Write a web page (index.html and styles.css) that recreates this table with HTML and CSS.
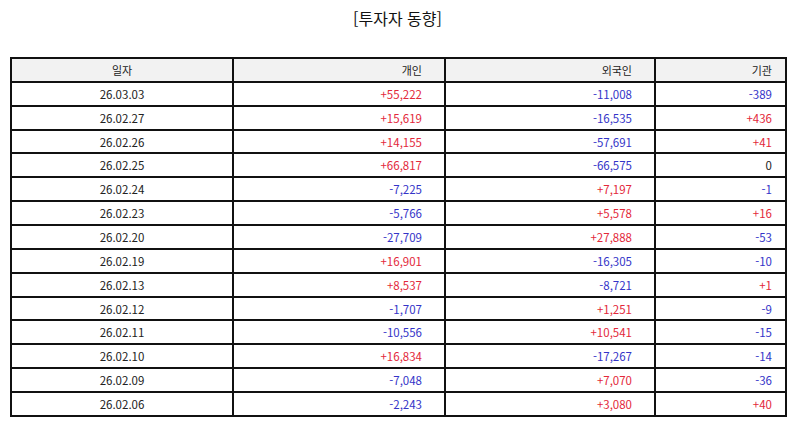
FILE: index.html
```html
<!DOCTYPE html>
<html lang="ko">
<head>
<meta charset="utf-8">
<title>투자자 동향</title>
<link rel="stylesheet" href="styles.css">
</head>
<body>
<div class="page">
  <h1 class="title">[투자자 동향]</h1>
  <table class="grid">
    <colgroup>
      <col class="c-date">
      <col class="c-ind">
      <col class="c-for">
      <col class="c-ins">
    </colgroup>
    <thead>
      <tr><th class="date">일자</th><th class="num p2">개인</th><th class="num p3">외국인</th><th class="num p4">기관</th></tr>
    </thead>
    <tbody>
      <tr><td class="date">26.03.03</td><td class="num p2 up">+55,222</td><td class="num p3 down">-11,008</td><td class="num p4 down">-389</td></tr>
      <tr><td class="date">26.02.27</td><td class="num p2 up">+15,619</td><td class="num p3 down">-16,535</td><td class="num p4 up">+436</td></tr>
      <tr><td class="date">26.02.26</td><td class="num p2 up">+14,155</td><td class="num p3 down">-57,691</td><td class="num p4 up">+41</td></tr>
      <tr><td class="date">26.02.25</td><td class="num p2 up">+66,817</td><td class="num p3 down">-66,575</td><td class="num p4 flat">0</td></tr>
      <tr><td class="date">26.02.24</td><td class="num p2 down">-7,225</td><td class="num p3 up">+7,197</td><td class="num p4 down">-1</td></tr>
      <tr><td class="date">26.02.23</td><td class="num p2 down">-5,766</td><td class="num p3 up">+5,578</td><td class="num p4 up">+16</td></tr>
      <tr><td class="date">26.02.20</td><td class="num p2 down">-27,709</td><td class="num p3 up">+27,888</td><td class="num p4 down">-53</td></tr>
      <tr><td class="date">26.02.19</td><td class="num p2 up">+16,901</td><td class="num p3 down">-16,305</td><td class="num p4 down">-10</td></tr>
      <tr><td class="date">26.02.13</td><td class="num p2 up">+8,537</td><td class="num p3 down">-8,721</td><td class="num p4 up">+1</td></tr>
      <tr><td class="date">26.02.12</td><td class="num p2 down">-1,707</td><td class="num p3 up">+1,251</td><td class="num p4 down">-9</td></tr>
      <tr><td class="date">26.02.11</td><td class="num p2 down">-10,556</td><td class="num p3 up">+10,541</td><td class="num p4 down">-15</td></tr>
      <tr><td class="date">26.02.10</td><td class="num p2 up">+16,834</td><td class="num p3 down">-17,267</td><td class="num p4 down">-14</td></tr>
      <tr><td class="date">26.02.09</td><td class="num p2 down">-7,048</td><td class="num p3 up">+7,070</td><td class="num p4 down">-36</td></tr>
      <tr><td class="date">26.02.06</td><td class="num p2 down">-2,243</td><td class="num p3 up">+3,080</td><td class="num p4 up">+40</td></tr>
    </tbody>
  </table>
</div>
</body>
</html>
```

FILE: styles.css
```css
html, body {
  margin: 0;
  padding: 0;
  background: #ffffff;
}

.page {
  padding: 0 9px 0 10px;
  font-family: "Noto Sans CJK KR", "Noto Sans", sans-serif;
  color: #222222;
}

.title {
  margin: 0;
  padding-top: 6px;
  height: 57px;
  box-sizing: border-box;
  text-align: center;
  font-size: 16px;
  font-weight: 400;
  line-height: 24px;
  color: #111111;
}

.grid {
  width: 775px;
  table-layout: fixed;
  border-collapse: collapse;
  font-size: 11.5px;
}

.c-date { width: 222px; }
.c-ind { width: 212px; }
.c-for { width: 210px; }
.c-ins { width: 131px; }

.grid th,
.grid td {
  border: 2px solid #111111;
  height: 21.87px;
  padding: 0;
  line-height: 14px;
  font-weight: 400;
}

.grid thead th {
  background: #f2f2f2;
  color: #222222;
  font-size: 11px;
}

.date { text-align: center; }
.num { text-align: right; }
.p2 { padding-right: 22px !important; }
.p3 { padding-right: 22px !important; }
.p4 { padding-right: 13px !important; }

.up { color: #e3283a; }
.down { color: #3434c8; }
.flat { color: #222222; }
```
